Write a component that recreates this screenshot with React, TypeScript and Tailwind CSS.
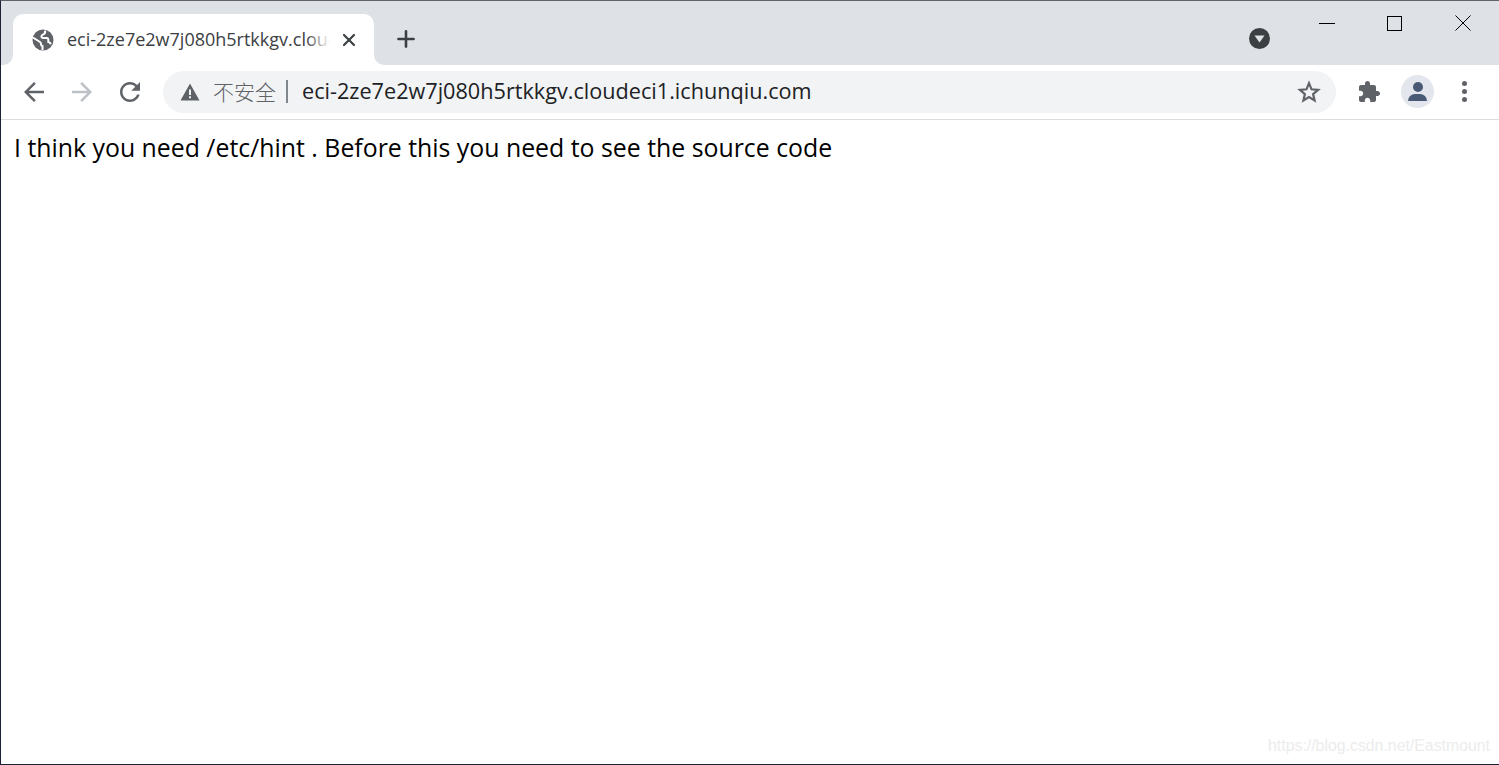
import { Plus, X } from 'lucide-react'

const uiFont = "font-['Open_Sans','Noto_Sans_CJK_SC',sans-serif]"

function Globe() {
  return (
    <svg className="w-[22px] h-[22px]" viewBox="0 0 22 22">
      <circle cx="11" cy="11" r="10.500" fill="#5f6368" />
      <path d="M1 8.500L8 13c.8.600 1 1.200 1 2.200 0 1 .4 1.600 1.500 1.800v4" fill="none" stroke="#fff" strokeWidth="2" />
      <path d="M13 1.500c.4 1.500 0 3-1.200 3.600-1 .5-2 .8-2.300 2-.2 1 .5 1.900 1.600 1.900h3.600c1 0 1.600.8 1.600 1.800v2.200c1.300.2 2.200 1 2.500 2.200" fill="none" stroke="#fff" strokeWidth="2" />
    </svg>
  )
}

function NavArrow({ flip, color }: { flip?: boolean; color: string }) {
  return (
    <svg className={flip ? 'w-[30px] h-[30px] -scale-x-100' : 'w-[30px] h-[30px]'} viewBox="0 0 24 24" fill={color}>
      <path d="M20 11H7.830l5.590-5.590L12 4l-8 8 8 8 1.410-1.410L7.830 13H20v-2z" />
    </svg>
  )
}

function Reload() {
  return (
    <svg className="w-[30px] h-[30px]" viewBox="0 0 24 24" fill="#5f6368">
      <path d="M17.650 6.350C16.200 4.900 14.210 4 12 4c-4.420 0-7.990 3.580-7.990 8s3.570 8 7.990 8c3.730 0 6.840-2.550 7.730-6h-2.080c-.820 2.330-3.040 4-5.650 4-3.310 0-6-2.690-6-6s2.690-6 6-6c1.660 0 3.140.690 4.220 1.780L13 11h7V4l-2.350 2.350z" />
    </svg>
  )
}

function Warning() {
  return (
    <svg className="w-[20px] h-[18px]" viewBox="0 0 20 18" fill="#5f6368">
      <path d="M10 0.500L19.500 17.500H0.500L10 0.500zM9 6.500V12H11V6.500H9zM9 13.300V15.300H11V13.300H9z" fillRule="evenodd" />
    </svg>
  )
}

function Puzzle() {
  return (
    <svg className="w-[24px] h-[24px]" viewBox="0 0 24 24" fill="#5f6368">
      <path d="M20.500 11H19V7c0-1.100-.9-2-2-2h-4V3.500C13 2.120 11.880 1 10.500 1S8 2.120 8 3.500V5H4c-1.100 0-1.990.9-1.990 2v3.800H3.500c1.490 0 2.700 1.210 2.700 2.700s-1.210 2.700-2.700 2.700H2V20c0 1.100.9 2 2 2h3.800v-1.500c0-1.490 1.210-2.700 2.700-2.700 1.490 0 2.700 1.210 2.700 2.700V22H17c1.100 0 2-.9 2-2v-4h1.500c1.380 0 2.500-1.120 2.500-2.500S21.880 11 20.500 11z" />
    </svg>
  )
}

function StarOutline() {
  return (
    <svg className="w-[24px] h-[24px]" viewBox="0 0 24 24" fill="none" stroke="#5f6368" strokeWidth="2.200" strokeLinejoin="miter">
      <path d="M12 3.200l2.500 6.100 6.600.5-5 4.300 1.500 6.400L12 17.100 6.400 20.500l1.500-6.400-5-4.300 6.600-.5L12 3.200z" />
    </svg>
  )
}

export default function App() {
  return (
    <div className={`w-[1499px] h-[765px] flex flex-col overflow-hidden bg-white border-l border-b border-[#1c2233] border-t border-t-[#5f6368] ${uiFont}`}>
      {/* Tab strip */}
      <div className="h-[64px] shrink-0 bg-[#dee1e6] flex items-end pl-[12px] relative">
        <div className="relative w-[361px] h-[51px] bg-white rounded-t-[10px] flex items-center pl-[19px] pr-[14px]">
          <div className="absolute -left-[10px] bottom-0 w-[10px] h-[10px] bg-white">
            <div className="w-full h-full bg-[#dee1e6] rounded-br-[10px]" />
          </div>
          <div className="absolute -right-[10px] bottom-0 w-[10px] h-[10px] bg-white">
            <div className="w-full h-full bg-[#dee1e6] rounded-bl-[10px]" />
          </div>
          <Globe />
          <div className="ml-[13px] w-[263px] overflow-hidden whitespace-nowrap text-[18px] text-[#3c4043] relative">
            eci-2ze7e2w7j080h5rtkkgv.cloudeci1.ichunqiu.com
            <div className="absolute right-0 top-0 bottom-0 w-[24px] bg-gradient-to-r from-transparent to-white" />
          </div>
          <X className="ml-[9px] w-[20px] h-[20px] text-[#3c4043]" strokeWidth={2.6} />
        </div>
        <div className="ml-[19px] mb-[13px] text-[#3c4043]">
          <Plus className="w-[26px] h-[26px]" strokeWidth={2.4} />
        </div>

        {/* Tab search button */}
        <div className="absolute left-[1248px] top-[27px] w-[21px] h-[21px] rounded-full bg-[#3c4043] flex items-center justify-center">
          <svg className="w-[11px] h-[8px]" viewBox="0 0 11 8" fill="#dee1e6">
            <path d="M0.500 0.500H10.500L5.500 7.500z" />
          </svg>
        </div>

        {/* Window controls */}
        <div className="absolute right-[2px] top-0 flex items-start">
          <div className="w-[68px] h-[44px] flex items-center justify-center">
            <div className="w-[16px] h-[1px] bg-black" />
          </div>
          <div className="w-[68px] h-[44px] flex items-center justify-center pr-[1px]">
            <div className="w-[15px] h-[15px] border border-black" />
          </div>
          <div className="w-[68px] h-[44px] flex items-center justify-center">
            <svg className="w-[16px] h-[16px]" viewBox="0 0 16 16" stroke="#000" strokeWidth="1" fill="none">
              <path d="M0.500 0.500L15.500 15.500M15.500 0.500L0.500 15.500" />
            </svg>
          </div>
        </div>
      </div>

      {/* Toolbar */}
      <div className="h-[55px] shrink-0 bg-white border-b border-[#dadce0] flex items-center pl-[18px] pb-[1px]">
        <NavArrow color="#5f6368" />
        <div className="ml-[18px]">
          <NavArrow flip color="#bdc1c6" />
        </div>
        <div className="ml-[18px]">
          <Reload />
        </div>

        <div className="ml-[18px] w-[1173px] h-[42px] rounded-full bg-[#f1f3f4] flex items-center pl-[17px] pr-[15px]">
          <Warning />
          <span className="ml-[13px] text-[21px] text-[#5f6368] font-['Noto_Sans_CJK_SC',sans-serif] font-light">不安全</span>
          <div className="ml-[10px] w-[2px] h-[23px] bg-[#80868b]" />
          <span className="ml-[14px] text-[21.65px] text-[#202124] whitespace-nowrap">eci-2ze7e2w7j080h5rtkkgv.cloudeci1.ichunqiu.com</span>
          <div className="ml-auto">
            <StarOutline />
          </div>
        </div>

        <div className="ml-[21px]">
          <Puzzle />
        </div>
        <div className="ml-[20px] w-[33px] h-[33px] rounded-full bg-[#e3e6ec] flex flex-col items-center justify-center">
          <div className="w-[10px] h-[10px] rounded-full bg-[#4a5a75]" />
          <div className="mt-[2px] w-[19px] h-[7px] rounded-t-[8px] bg-[#4a5a75]" />
        </div>
        <div className="ml-[28px] flex flex-col gap-[3px]">
          <div className="w-[5px] h-[5px] rounded-full bg-[#5f6368]" />
          <div className="w-[5px] h-[5px] rounded-full bg-[#5f6368]" />
          <div className="w-[5px] h-[5px] rounded-full bg-[#5f6368]" />
        </div>
      </div>

      {/* Page */}
      <div className="relative flex-1 bg-white pl-[13px] pt-[9px]">
        <p className="text-[24.85px] leading-[36px] text-black whitespace-nowrap">
          I think you need /etc/hint . Before this you need to see the source code
        </p>
        <span className="absolute right-[9px] bottom-[6px] text-[15.85px] text-[#ececec] font-['Liberation_Sans',sans-serif]">
          https://blog.csdn.net/Eastmount
        </span>
      </div>
    </div>
  )
}
